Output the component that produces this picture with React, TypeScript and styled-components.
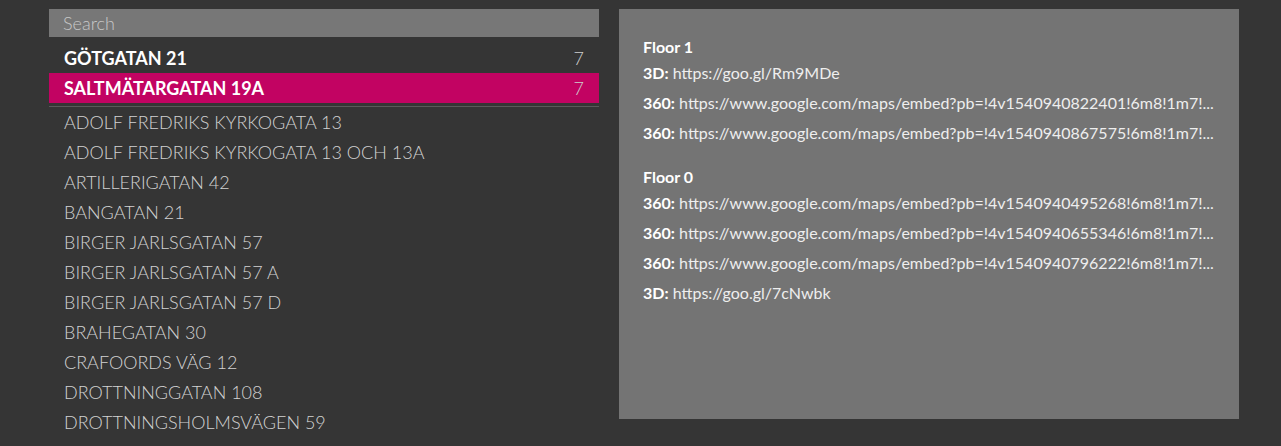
import React from 'react'
import styled, { createGlobalStyle } from 'styled-components'

const GlobalStyle = createGlobalStyle`
  html, body {
    margin: 0;
    padding: 0;
    background: #353535;
    overflow: hidden;
    font-family: Lato, 'Open Sans', sans-serif;
  }
`

interface Address {
  name: string
  count?: number
}

interface Link {
  kind: string
  url: string
}

interface Floor {
  title: string
  links: Link[]
}

const pinned: Address[] = [
  { name: 'GÖTGATAN 21', count: 7 },
  { name: 'SALTMÄTARGATAN 19A', count: 7 },
]

const addresses: string[] = [
  'ADOLF FREDRIKS KYRKOGATA 13',
  'ADOLF FREDRIKS KYRKOGATA 13 OCH 13A',
  'ARTILLERIGATAN 42',
  'BANGATAN 21',
  'BIRGER JARLSGATAN 57',
  'BIRGER JARLSGATAN 57 A',
  'BIRGER JARLSGATAN 57 D',
  'BRAHEGATAN 30',
  'CRAFOORDS VÄG 12',
  'DROTTNINGGATAN 108',
  'DROTTNINGSHOLMSVÄGEN 59',
]

const maps = 'https://www.google.com/maps/embed?pb=!4v'

const floors: Floor[] = [
  {
    title: 'Floor 1',
    links: [
      { kind: '3D', url: 'https://goo.gl/Rm9MDe' },
      { kind: '360', url: `${maps}1540940822401!6m8!1m7!...` },
      { kind: '360', url: `${maps}1540940867575!6m8!1m7!...` },
    ],
  },
  {
    title: 'Floor 0',
    links: [
      { kind: '360', url: `${maps}1540940495268!6m8!1m7!...` },
      { kind: '360', url: `${maps}1540940655346!6m8!1m7!...` },
      { kind: '360', url: `${maps}1540940796222!6m8!1m7!...` },
      { kind: '3D', url: 'https://goo.gl/7cNwbk' },
    ],
  },
]

const Page = styled.div`
  display: flex;
  align-items: flex-start;
  gap: 20px;
  padding: 9px 0 0 49px;
`

const Sidebar = styled.aside`
  width: 550px;
  display: flex;
  flex-direction: column;
`

const SearchInput = styled.input`
  box-sizing: border-box;
  width: 100%;
  height: 28px;
  margin: 0 0 6px;
  padding: 0 14px;
  border: 0;
  outline: 0;
  background: #777777;
  color: #eeeeee;
  font-family: inherit;
  font-size: 18px;
  font-weight: 300;

  &::placeholder {
    color: #c8c8c8;
  }
`

const List = styled.ul`
  list-style: none;
  margin: 0;
  padding: 0;
`

const PinnedList = styled(List)`
  border-bottom: 1px solid #5a5a5a;
  padding-bottom: 3px;
  margin-bottom: 0;
`

const Row = styled.li<{ $active?: boolean; $pinned?: boolean }>`
  display: flex;
  align-items: center;
  justify-content: space-between;
  height: 30px;
  padding: 0 15px;
  background: ${p => (p.$active ? '#c20362' : 'transparent')};
  color: ${p => (p.$pinned ? '#ffffff' : '#d2d2d2')};
  font-size: 18px;
  line-height: 30px;
  font-weight: ${p => (p.$pinned ? 700 : 300)};
  white-space: nowrap;
`

const Count = styled.span`
  color: #cfcfcf;
  font-weight: 300;
`

const Panel = styled.section`
  box-sizing: border-box;
  width: 620px;
  height: 410px;
  padding: 28px 24px 0;
  background: #747474;
`

const FloorBlock = styled.div`
  margin-bottom: 14px;
`

const FloorTitle = styled.div`
  color: #ffffff;
  font-size: 16px;
  font-weight: 700;
  line-height: 20px;
  margin-bottom: 6px;
`

const LinkLine = styled.div`
  color: #eeeeee;
  font-size: 16px;
  line-height: 20px;
  height: 30px;
  white-space: nowrap;
  overflow: hidden;
  text-overflow: ellipsis;
`

const Kind = styled.b`
  color: #ffffff;
  font-weight: 700;
`

export default function App() {
  return (
    <>
      <GlobalStyle />
      <Page>
        <Sidebar>
          <SearchInput placeholder="Search" />
          <PinnedList>
            {pinned.map((a, i) => (
              <Row key={a.name} $pinned $active={i === 1}>
                <span>{a.name}</span>
                <Count>{a.count}</Count>
              </Row>
            ))}
          </PinnedList>
          <List>
            {addresses.map(name => (
              <Row key={name}>{name}</Row>
            ))}
          </List>
        </Sidebar>
        <Panel>
          {floors.map(floor => (
            <FloorBlock key={floor.title}>
              <FloorTitle>{floor.title}</FloorTitle>
              {floor.links.map((link, i) => (
                <LinkLine key={i}>
                  <Kind>{link.kind}:</Kind> {link.url}
                </LinkLine>
              ))}
            </FloorBlock>
          ))}
        </Panel>
      </Page>
    </>
  )
}
